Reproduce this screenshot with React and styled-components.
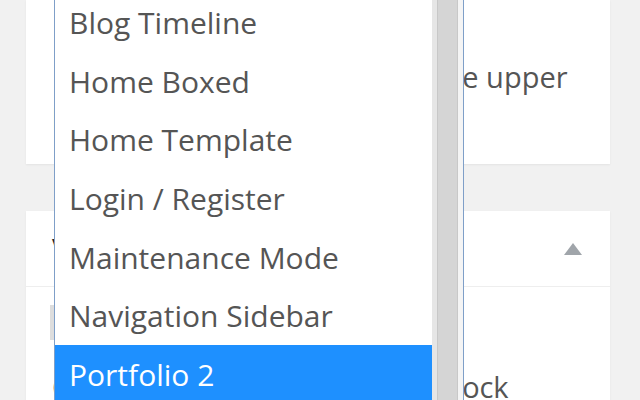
import React from 'react';
import styled, { createGlobalStyle } from 'styled-components';

const GlobalStyle = createGlobalStyle`
  html, body {
    margin: 0;
    padding: 0;
    background: #f1f1f1;
    overflow: hidden;
  }
  body {
    font-family: "Open Sans", "Noto Sans", sans-serif;
  }
`;

const Page = styled.div`
  position: relative;
  width: 640px;
  height: 400px;
  overflow: hidden;
  padding-left: 26px;
  box-sizing: border-box;
`;

const Card = styled.div`
  width: 584px;
  height: ${props => props.height}px;
  margin-top: ${props => props.top}px;
  background: #fff;
  box-shadow: 0 1px 2px rgba(0, 0, 0, 0.06);
  box-sizing: border-box;
  overflow: hidden;
`;

const CardBody = styled.div`
  padding: ${props => props.pad};
  color: #555;
  font-size: 29px;
  line-height: 42px;
`;

const Line = styled.div`
  white-space: nowrap;
  letter-spacing: ${props => props.spacing || 0}px;
`;

const CardHeader = styled.div`
  display: flex;
  align-items: center;
  justify-content: space-between;
  height: 75px;
  padding: 0 28px 0 26px;
  border-bottom: 1px solid #eee;
  color: #23282d;
  font-size: 29px;
`;

const Toggle = styled.span`
  width: 0;
  height: 0;
  border-left: 9px solid transparent;
  border-right: 9px solid transparent;
  border-bottom: 12px solid #a0a5aa;
`;

const FieldEdge = styled.div`
  width: 4px;
  height: 35px;
  margin: 18px 0 0 24px;
  background: #ddd;
`;

const Dropdown = styled.div`
  position: absolute;
  left: 54px;
  top: -7px;
  width: 410px;
  height: 420px;
  display: flex;
  background: #fff;
  border-left: 1px solid #7f9fc8;
  border-right: 1px solid #7f9fc8;
  box-sizing: border-box;
`;

const OptionList = styled.ul`
  flex: 1;
  margin: 0;
  padding: 0;
  list-style: none;
`;

const Option = styled.li`
  height: 58.7px;
  display: flex;
  align-items: center;
  padding-left: 14px;
  box-sizing: border-box;
  font-size: 30px;
  color: ${props => (props.selected ? '#fff' : '#555')};
  background: ${props => (props.selected ? '#1e90ff' : 'transparent')};
  white-space: nowrap;
`;

const Scrollbar = styled.div`
  width: 31px;
  display: flex;
  background: #f4f4f4;
  border-left: 5px solid #e6e6e6;
  box-sizing: border-box;
`;

const Thumb = styled.div`
  width: 21px;
  background: #d5d5d5;
  border-left: 1px solid #c8c8c8;
  border-right: 1px solid #c8c8c8;
  box-sizing: border-box;
`;

const options = [
  'Blog Timeline',
  'Home Boxed',
  'Home Template',
  'Login / Register',
  'Maintenance Mode',
  'Navigation Sidebar',
  'Portfolio 2',
];

const App = () => (
  <>
    <GlobalStyle />
    <Page>
      <Card top={0} height={164}>
        <CardBody pad="56px 26px 0 26px">
          <Line>Enable it to show the title in the upper</Line>
          <Line>left corner of the page</Line>
        </CardBody>
      </Card>

      <Card top={47} height={200}>
        <CardHeader>
          <span>Visibility</span>
          <Toggle />
        </CardHeader>
        <FieldEdge />
        <CardBody pad="26px 26px 0">
          <Line spacing={-0.2}>Check box to hide the footer block</Line>
        </CardBody>
      </Card>

      <Dropdown>
        <OptionList>
          {options.map(option => (
            <Option key={option} selected={option === 'Portfolio 2'}>
              {option}
            </Option>
          ))}
        </OptionList>
        <Scrollbar>
          <Thumb />
        </Scrollbar>
      </Dropdown>
    </Page>
  </>
);

export default App;
